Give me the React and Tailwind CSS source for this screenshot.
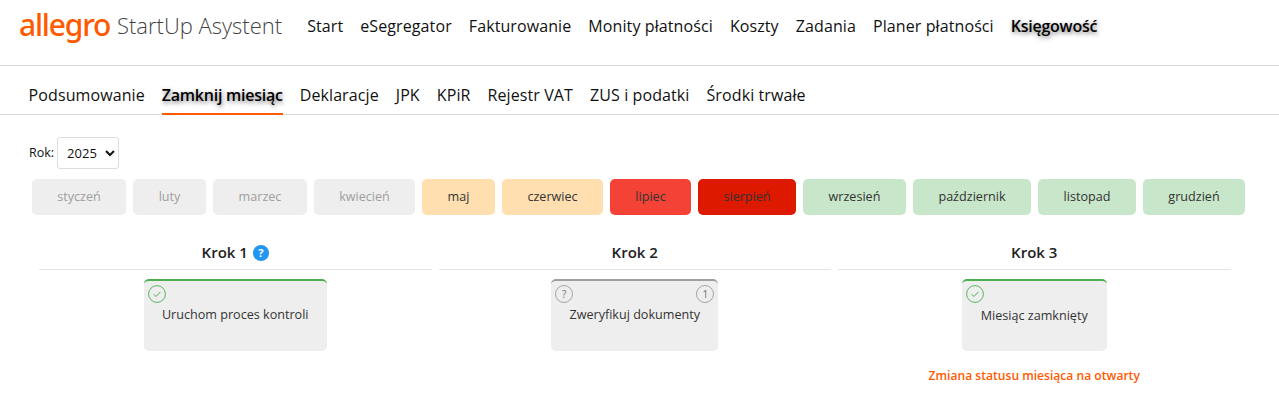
import React from 'react'

const mainNav = ['Start', 'eSegregator', 'Fakturowanie', 'Monity płatności', 'Koszty', 'Zadania', 'Planer płatności']
const subNav = ['Podsumowanie', 'Zamknij miesiąc', 'Deklaracje', 'JPK', 'KPiR', 'Rejestr VAT', 'ZUS i podatki', 'Środki trwałe']

const grey = 'bg-[#eeeeee] text-[#9e9e9e]'
const orange = 'bg-[#ffdeb0] text-[#333333]'
const green = 'bg-[#c8e6c9] text-[#333333]'

const months = [
  { name: 'styczeń', w: 'w-[94px]', c: grey },
  { name: 'luty', w: 'w-[73px]', c: grey },
  { name: 'marzec', w: 'w-[94px]', c: grey },
  { name: 'kwiecień', w: 'w-[101px]', c: grey },
  { name: 'maj', w: 'w-[73px]', c: orange },
  { name: 'czerwiec', w: 'w-[101px]', c: orange },
  { name: 'lipiec', w: 'w-[81px]', c: 'bg-[#f44336] text-[#333333]' },
  { name: 'sierpień', w: 'w-[98px]', c: 'bg-[#dd1900] text-[#333333]' },
  { name: 'wrzesień', w: 'w-[103px]', c: green },
  { name: 'październik', w: 'w-[118px]', c: green },
  { name: 'listopad', w: 'w-[98px]', c: green },
  { name: 'grudzień', w: 'w-[102px]', c: green },
]

const CheckBadge = () => (
  <svg width="18" height="18" viewBox="0 0 18 18" fill="none">
    <circle cx="9" cy="9" r="8.4" stroke="#4caf50" strokeWidth="0.9" />
    <path d="M5.6 9.2l2.4 2.3 4.4-4.6" stroke="#4caf50" strokeWidth="1" />
  </svg>
)

const TextBadge = ({ children }) => (
  <span className="flex h-[18px] w-[18px] items-center justify-center rounded-full border border-[#a5a5a5] text-[10px] leading-none text-[#77706c]">
    {children}
  </span>
)

const StepCard = ({ width, color, left, right, textTop = 'mt-[3px]', children }) => (
  <div className={`${width} ${color} flex h-[72px] flex-col rounded-[5px] border-t-2 bg-[#eeeeee] px-[4px] pt-[4px]`}>
    <div className="flex h-[18px] justify-between">
      <span>{left}</span>
      <span>{right}</span>
    </div>
    <div className={`${textTop} text-center text-[12.6px] leading-[18px] text-[#333333]`}>{children}</div>
  </div>
)

const Step = ({ title, info, children }) => (
  <div className="flex w-[392.5px] flex-col items-center">
    <div className="flex h-[34px] w-full items-center justify-center gap-[5px] border-b border-[#e4e4e4] text-[15px] font-semibold text-[#222222]">
      {title}
      {info && (
        <span className="flex h-[16px] w-[16px] items-center justify-center rounded-full bg-[#2196f3] text-[11px] font-bold leading-none text-white">
          ?
        </span>
      )}
    </div>
    <div className="mt-[9px] flex flex-col items-center">{children}</div>
  </div>
)

export default function App() {
  return (
    <div className="h-[403px] overflow-hidden bg-white font-['Open_Sans',sans-serif] text-[#111111]">
      {/* top bar */}
      <header className="flex h-[66px] items-start border-b border-[#d9d9d9] pl-[19px] pt-[9px]">
        <span className="font-['Noto_Sans',sans-serif] w-[91px] text-[30px] font-medium leading-[32px] tracking-[-1.2px] text-[#ff5a00]">
          allegro
        </span>
        <span className="ml-[7px] text-[22px] font-light leading-[32px] text-[#444444]">StartUp Asystent</span>
        <nav className="ml-[25px] flex gap-[17px] pt-[6px] text-[16px] leading-[22px] tracking-[0.1px]">
          {mainNav.map((item) => (
            <a key={item}>{item}</a>
          ))}
          <a className="font-semibold tracking-[-0.25px] text-black [text-shadow:1px_2px_4px_rgba(0,0,0,0.5)]">Księgowość</a>
        </nav>
      </header>

      {/* sub navigation */}
      <nav className="flex h-[49px] gap-[17px] border-b border-[#d9d9d9] pl-[28.6px] pt-[18px] text-[16px] leading-[22px] tracking-[0.1px]">
        {subNav.map((item) =>
          item === 'Zamknij miesiąc' ? (
            <a key={item} className="h-[31px] border-b-2 border-[#ff5a00] font-semibold tracking-[-0.25px] text-black [text-shadow:1px_2px_4px_rgba(0,0,0,0.5)]">
              {item}
            </a>
          ) : (
            <a key={item}>{item}</a>
          )
        )}
      </nav>

      {/* year */}
      <div className="flex items-center gap-[3px] pl-[29px] pt-[22px] text-[12.5px]">
        <span>Rok:</span>
        <select className="h-[32px] w-[62px] rounded-[3px] border border-[#dddddd] bg-white pl-[5px] text-[13px]" defaultValue="2025">
          <option>2025</option>
        </select>
      </div>

      {/* months */}
      <div className="mt-[10px] flex gap-[7px] pl-[32px]">
        {months.map((m) => (
          <div key={m.name} className={`${m.w} ${m.c} flex h-[36px] items-center justify-center rounded-[5px] text-[12.6px]`}>
            {m.name}
          </div>
        ))}
      </div>

      {/* steps */}
      <div className="mt-[21px] flex gap-[7px] pl-[39px]">
        <Step title="Krok 1" info>
          <StepCard width="w-[183px]" color="border-[#4caf50]" left={<CheckBadge />}>
            Uruchom proces kontroli
          </StepCard>
        </Step>
        <Step title="Krok 2">
          <StepCard width="w-[167px]" color="border-[#9e9e9e]" left={<TextBadge>?</TextBadge>} right={<TextBadge>1</TextBadge>}>
            Zweryfikuj dokumenty
          </StepCard>
        </Step>
        <Step title="Krok 3">
          <StepCard width="w-[145px]" color="border-[#4caf50]" left={<CheckBadge />} textTop="mt-[4px]">
            Miesiąc zamknięty
          </StepCard>
          <a className="mt-[16px] text-[12.1px] font-semibold leading-[18px] text-[#ff5a00]">Zmiana statusu miesiąca na otwarty</a>
        </Step>
      </div>
    </div>
  )
}
